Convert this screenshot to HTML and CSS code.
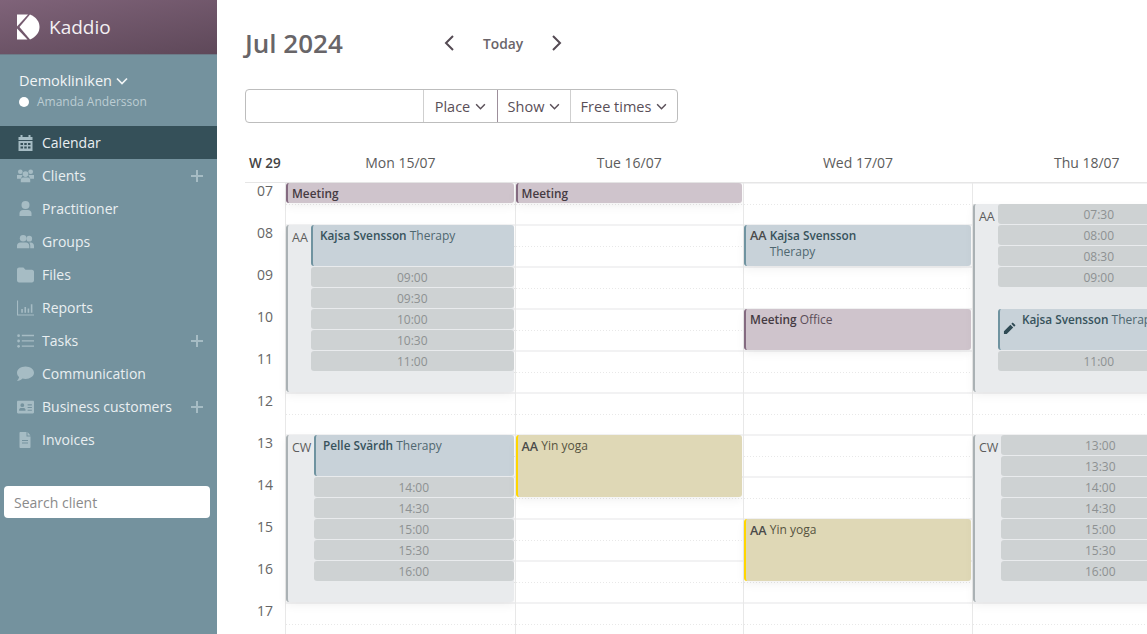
FILE: index.html
```html
<!DOCTYPE html>
<html lang="en">

<head>
    <meta charset="UTF-8">
    <title>Kaddio</title>
    <link rel="stylesheet" href="styles.css">
</head>

<body>
    <aside class="sidebar">
        <div class="brand">
            <svg class="logo" viewBox="0 0 24 26" width="24" height="26">
                <path d="M0 .5h11L0 12.500z" />
                <path d="M0 14.500 10.500 25.500H0z" />
                <path d="M13 .5C19 3 22.500 7.500 22.500 13S19 22.800 13 25.500L2.500 13z" />
            </svg>
            <span class="brand-name">Kaddio</span>
        </div>
        <div class="clinic">
            <div class="clinic-name">Demokliniken
                <svg class="chev" viewBox="0 0 12 8" width="12" height="8"><path d="M1 1.500 6 6.500l5-5" /></svg>
            </div>
            <div class="clinic-user"><i class="dot"></i>Amanda Andersson</div>
        </div>
        <nav class="menu">
            <a class="menu-item active">
                <svg class="ico" viewBox="0 0 16 16"><path d="M3 0h2v2h6V0h2v2h2v3H1V2h2zM1 6h14v10H1zM3 8v2h2.500V8zm3.750 0v2h2.500V8zM10.500 8v2H13V8zM3 11.500v2h2.500v-2zm3.750 0v2h2.500v-2zm3.750 0v2H13v-2z" fill-rule="evenodd" /></svg>
                Calendar
            </a>
            <a class="menu-item">
                <svg class="ico" viewBox="0 0 18 15"><circle cx="3.500" cy="3" r="2.500" /><circle cx="14.500" cy="3" r="2.500" /><circle cx="9" cy="5.500" r="3" /><path d="M0 6.500h6l-2 4H0zM12 6.500h6v4h-4zM4 14v-2.500C4 10 5 9 6.500 9h5c1.500 0 2.500 1 2.500 2.500V14z" /></svg>
                Clients<span class="plus"></span>
            </a>
            <a class="menu-item">
                <svg class="ico" viewBox="0 0 16 16"><circle cx="8" cy="4" r="4" /><path d="M2 15v-2.500C2 10.500 3.500 9 5.500 9h5c2 0 3.500 1.500 3.500 3.500V15z" /></svg>
                Practitioner
            </a>
            <a class="menu-item">
                <svg class="ico" viewBox="0 0 18 15"><circle cx="6.500" cy="3.500" r="3.500" /><circle cx="13" cy="4" r="3" /><path d="M0 14v-2.500C0 9.500 1.500 8 3.500 8h6c2 0 3.500 1.500 3.500 3.500V14zM14 14v-3c0-1-.4-2-1-3h1.500C16.500 8 18 9.500 18 11.500V14z" /></svg>
                Groups
            </a>
            <a class="menu-item">
                <svg class="ico" viewBox="0 0 16 14"><path d="M0 2c0-1 .7-2 2-2h4l2 2h6c1.300 0 2 1 2 2v8c0 1-.7 2-2 2H2c-1.300 0-2-1-2-2z" /></svg>
                Files
            </a>
            <a class="menu-item">
                <svg class="ico" viewBox="0 0 16 14"><path d="M0 0h1v13h15v1H0zM4 8h1.500v3.500H4zM7 6h1.500v5.500H7zM10 7.500h1.500v4H10zM13 3.500h1.500v8H13z" /></svg>
                Reports
            </a>
            <a class="menu-item">
                <svg class="ico" viewBox="0 0 16 14"><circle cx="1.500" cy="2" r="1.300" /><circle cx="1.500" cy="7" r="1.300" /><circle cx="1.500" cy="12" r="1.300" /><path d="M4.500 1.200H16v1.300H4.500zM4.500 6.200H16v1.300H4.500zM4.500 11.200H16v1.300H4.500z" /></svg>
                Tasks<span class="plus"></span>
            </a>
            <a class="menu-item">
                <svg class="ico" viewBox="0 0 16 14"><path d="M8 0c4.400 0 8 2.600 8 5.800s-3.600 5.800-8 5.800c-1 0-1.900-.1-2.800-.4C3.800 12.500 2 13.500 0 13.500c1-1 1.800-2.200 2-3.600C.8 8.900 0 7.400 0 5.800 0 2.600 3.600 0 8 0z" /></svg>
                Communication
            </a>
            <a class="menu-item">
                <svg class="ico" viewBox="0 0 16 12"><path d="M1 0h14c.6 0 1 .4 1 1v10c0 .6-.4 1-1 1H1c-.6 0-1-.4-1-1V1c0-.6.4-1 1-1zm4 2.500a1.800 1.800 0 1 0 0 3.600 1.800 1.800 0 0 0 0-3.600zM2 9.500h6v-1C8 7.500 7 7 6 7H4C3 7 2 7.500 2 8.500zM10 3.500v1h4v-1zm0 2.500v1h4V6zm0 2.500v1h4v-1z" fill-rule="evenodd" /></svg>
                Business customers<span class="plus"></span>
            </a>
            <a class="menu-item">
                <svg class="ico" viewBox="0 0 16 16"><path d="M3 0h6v4.500h4V15c0 .6-.4 1-1 1H3c-.6 0-1-.4-1-1V1c0-.6.4-1 1-1zm7 0 3 3.500h-3zM4.500 8v1h6V8zm0 2.500v1h6v-1z" fill-rule="evenodd" /></svg>
                Invoices
            </a>
        </nav>
        <input class="client-search" type="text" placeholder="Search client">
    </aside>

    <main class="content">
        <div class="topbar">
            <h1 class="month">Jul 2024</h1>
            <div class="pager">
                <svg class="arrow" viewBox="0 0 12 18" width="12" height="18"><path d="M10 2 3 9l7 7" /></svg>
                <span class="today">Today</span>
                <svg class="arrow" viewBox="0 0 12 18" width="12" height="18"><path d="m2 2 7 7-7 7" /></svg>
            </div>
        </div>

        <div class="filters">
            <input class="filter-input" type="text">
            <div class="filter filter-place">Place <svg class="caret" viewBox="0 0 12 8" width="11" height="7"><path d="M1 1.500 6 6.500l5-5" /></svg></div>
            <div class="filter filter-show">Show <svg class="caret" viewBox="0 0 12 8" width="11" height="7"><path d="M1 1.500 6 6.500l5-5" /></svg></div>
            <div class="filter filter-free">Free times <svg class="caret" viewBox="0 0 12 8" width="11" height="7"><path d="M1 1.500 6 6.500l5-5" /></svg></div>
        </div>

        <div class="week-head">
            <div class="week-no">W 29</div>
            <div class="day-name">Mon 15/07</div>
            <div class="day-name">Tue 16/07</div>
            <div class="day-name">Wed 17/07</div>
            <div class="day-name">Thu 18/07</div>
        </div>

        <div class="week">
            <div class="hours">
                <span>07</span><span>08</span><span>09</span><span>10</span><span>11</span><span>12</span>
                <span>13</span><span>14</span><span>15</span><span>16</span><span>17</span>
            </div>

            <!-- each grid row is half an hour, row 1 = 07:00 -->
            <div class="day">
                <div class="ev meeting r1-1"><b>Meeting</b></div>
                <div class="shift r3-8">
                    <div class="initials">AA</div>
                    <div class="slots">
                        <div class="ev client span-2"><b>Kajsa Svensson</b> Therapy</div>
                        <div class="slot">09:00</div>
                        <div class="slot">09:30</div>
                        <div class="slot">10:00</div>
                        <div class="slot">10:30</div>
                        <div class="slot">11:00</div>
                    </div>
                </div>
                <div class="shift r13-8">
                    <div class="initials wide">CW</div>
                    <div class="slots">
                        <div class="ev client span-2"><b>Pelle Svärdh</b> Therapy</div>
                        <div class="slot">14:00</div>
                        <div class="slot">14:30</div>
                        <div class="slot">15:00</div>
                        <div class="slot">15:30</div>
                        <div class="slot">16:00</div>
                    </div>
                </div>
            </div>

            <div class="day">
                <div class="ev meeting r1-1"><b>Meeting</b></div>
                <div class="ev yoga r13-3"><b class="who">AA</b> Yin yoga</div>
            </div>

            <div class="day">
                <div class="ev client two-line r3-2">
                    <b class="who">AA</b>
                    <div><b>Kajsa Svensson</b><br>Therapy</div>
                </div>
                <div class="ev meeting r7-2"><b>Meeting</b> Office</div>
                <div class="ev yoga r17-3"><b class="who">AA</b> Yin yoga</div>
            </div>

            <div class="day">
                <div class="shift r2-9">
                    <div class="initials">AA</div>
                    <div class="slots">
                        <div class="slot">07:30</div>
                        <div class="slot">08:00</div>
                        <div class="slot">08:30</div>
                        <div class="slot">09:00</div>
                        <div class="slot-gap"></div>
                        <div class="ev client editing span-2">
                            <svg class="pencil" viewBox="0 0 14 14" width="13" height="13"><path d="M10.500.5 13.500 3.500 12 5 9 2zM8 3l3 3-7 7H1v-3z" /></svg>
                            <span class="nowrap"><b>Kajsa Svensson</b> Therapy</span>
                        </div>
                        <div class="slot">11:00</div>
                    </div>
                </div>
                <div class="shift r13-8">
                    <div class="initials wide">CW</div>
                    <div class="slots">
                        <div class="slot">13:00</div>
                        <div class="slot">13:30</div>
                        <div class="slot">14:00</div>
                        <div class="slot">14:30</div>
                        <div class="slot">15:00</div>
                        <div class="slot">15:30</div>
                        <div class="slot">16:00</div>
                    </div>
                </div>
            </div>
        </div>
    </main>
</body>

</html>
```

FILE: styles.css
```css
* {
    box-sizing: border-box;
}

html,
body {
    height: 100%;
}

body {
    margin: 0;
    display: flex;
    overflow: hidden;
    background: #fff;
    font-family: "Open Sans", "Noto Sans", sans-serif;
    font-size: 14px;
    color: #555;
}

/* sidebar */
.sidebar {
    flex: 0 0 217px;
    background: #74929e;
    color: #edf2f4;
}

.brand {
    height: 55px;
    display: flex;
    align-items: center;
    padding-left: 17px;
    background: linear-gradient(170deg, #7f6379 0%, #5e4859 100%);
    border-bottom: 1px solid #6c7b88;
}

.logo {
    fill: #fff;
}

.brand-name {
    margin-left: 8px;
    font-size: 19px;
    color: #f3eff2;
}

.clinic {
    height: 71px;
    padding: 16px 0 0 19px;
}

.clinic-name {
    display: flex;
    align-items: center;
    gap: 4px;
    font-size: 14.500px;
    line-height: 20px;
    color: #f2f5f6;
}

.chev {
    fill: none;
    stroke: #f2f5f6;
    stroke-width: 1.700;
}

.clinic-user {
    display: flex;
    align-items: center;
    margin-top: 1px;
    font-size: 12px;
    line-height: 20px;
    color: #bccdd3;
}

.dot {
    width: 10px;
    height: 10px;
    margin-right: 8px;
    border-radius: 50%;
    background: #fff;
}

.menu {
    display: flex;
    flex-direction: column;
}

.menu-item {
    height: 33px;
    display: flex;
    align-items: center;
    padding: 0 14px 0 17px;
    font-size: 14px;
    color: #e9eff1;
}

.menu-item.active {
    background: #355059;
}

.ico {
    width: 17px;
    height: 16px;
    margin-right: 8px;
    fill: #a6bcc4;
    flex: none;
}

.plus {
    position: relative;
    width: 12px;
    height: 12px;
    margin-left: auto;
}

.plus::before,
.plus::after {
    content: "";
    position: absolute;
    background: #a6bcc4;
}

.plus::before {
    left: 0;
    right: 0;
    top: 5px;
    height: 2px;
}

.plus::after {
    top: 0;
    bottom: 0;
    left: 5px;
    width: 2px;
}

.client-search {
    display: block;
    width: 206px;
    height: 32px;
    margin: 30px 0 0 4px;
    padding: 0 10px;
    border: 0;
    border-radius: 4px;
    background: #fff;
    font: 14px "Open Sans", sans-serif;
}

.client-search::placeholder {
    color: #8a8a8a;
}

/* main column */
.content {
    flex: 1;
    min-width: 0;
    padding-left: 28px;
    overflow: hidden;
}

.topbar {
    height: 89px;
    display: flex;
    padding-top: 24px;
    align-items: flex-start;
}

.month {
    width: 198px;
    margin: 0;
    font-size: 26px;
    line-height: 38px;
    font-weight: 600;
    color: #686568;
}

.pager {
    display: flex;
    align-items: center;
    height: 38px;
}

.arrow {
    fill: none;
    stroke: #544a53;
    stroke-width: 2;
}

.today {
    width: 41px;
    margin: 0 27px 0 28px;
    font-size: 13.800px;
    font-weight: 600;
    color: #6a6469;
    white-space: nowrap;
}

.filters {
    width: 433px;
    height: 34px;
    display: flex;
    border: 1px solid #bdbdbd;
    border-radius: 4px;
}

.filter-input {
    width: 177px;
    border: 0;
    background: transparent;
    outline: none;
}

.filter {
    display: flex;
    align-items: center;
    justify-content: center;
    gap: 5px;
    border-left: 1px solid #cfcfcf;
    font-size: 14.500px;
    color: #5a4f58;
}

.filter-place {
    width: 74px;
}

.filter-show {
    width: 73px;
    border-left-color: #9d8f9b;
}

.filter-free {
    width: 107px;
}

.caret {
    fill: none;
    stroke: #5a4f58;
    stroke-width: 1.700;
}

.week-head {
    width: 960px;
    display: grid;
    grid-template-columns: 41px repeat(4, 228.800px);
    height: 60px;
    padding-top: 30px;
    border-bottom: 1px solid #e6e6e6;
    line-height: 20px;
}

.week-no {
    padding-left: 4px;
    font-weight: 600;
    color: #444;
    font-size: 13.500px;
}

.day-name {
    text-align: center;
    color: #5c5c5c;
}

.week {
    width: 960px;
    display: grid;
    grid-template-columns: 40px 229.600px 228.500px 228.800px 228.800px;
}

.hours {
    display: grid;
    grid-auto-rows: 42px;
    padding-right: 12px;
    text-align: right;
    font-size: 14px;
    line-height: 16px;
    color: #666;
}

/* hour line, then a white mask with a slit that shows the dots at half past */
.day {
    display: grid;
    grid-template-rows: repeat(24, 21px);
    align-content: start;
    height: 504px;
    border-left: 1px solid #e8e8e8;
    background:
        linear-gradient(#f2f2f3 0 2px, transparent 2px) 0 -1px / 100% 42px,
        linear-gradient(#fff 0 21px, transparent 21px 22px, #fff 22px) 0 0 / 100% 42px,
        linear-gradient(to right, #e8e8e8 1px, transparent 1px) 0 0 / 3px 42px;
}

.r1-1 { grid-row: 1 / span 1; }
.r2-9 { grid-row: 2 / span 9; }
.r3-2 { grid-row: 3 / span 2; }
.r3-8 { grid-row: 3 / span 8; }
.r7-2 { grid-row: 7 / span 2; }
.r13-3 { grid-row: 13 / span 3; }
.r13-8 { grid-row: 13 / span 8; }
.r17-3 { grid-row: 17 / span 3; }
.span-2 { grid-row: span 2; }

.day > .ev,
.day > .shift {
    grid-column: 1;
    margin: 0 1px 1px 0;
}

.ev {
    border-left: 2px solid #6f93a0;
    border-radius: 3px;
    padding: 1px 0 0 4px;
    font-size: 12px;
    line-height: 18px;
    color: #555;
    overflow: hidden;
    white-space: nowrap;
    box-shadow: 0 4px 10px rgba(0, 0, 0, .05);
}

.ev b {
    font-size: 11.800px;
    font-weight: 600;
}

.client.ev {
    padding-left: 7px;
}

.client.two-line {
    padding-left: 4px;
}

.meeting {
    background: #cfc4cc;
    border-left-color: #846a80;
    color: #5b4e58;
}

.meeting b {
    color: #453b43;
}

.client {
    background: #c8d2d9;
    color: #4f6770;
}

.client b {
    color: #37525c;
}

.yoga {
    padding-top: 2px;
    background: #dfd8b6;
    border-left-color: #ffd600;
    color: #565340;
}

.ev .who {
    color: #4a4a4a;
    font-size: 12.500px;
    font-weight: 600;
}

.yoga .who {
    vertical-align: -1px;
}

.two-line {
    display: flex;
    gap: 3px;
    line-height: 16px;
    padding-top: 2px;
}

.two-line .who {
    margin-top: 1px;
}

.shift {
    display: flex;
    background: #e9ebed;
    border-left: 2px solid #aab1b4;
    border-radius: 3px;
    box-shadow: 0 4px 10px rgba(0, 0, 0, .05);
}

.initials {
    flex: none;
    width: 23px;
    padding: 3px 0 0 4px;
    font-size: 12.500px;
    line-height: 20px;
    color: #5c5c5c;
}

.initials.wide {
    width: 26px;
}

.slots {
    flex: 1;
    min-width: 0;
    display: grid;
    grid-auto-rows: 21px;
}

.slot {
    margin-bottom: 1px;
    border-radius: 3px;
    background: #ced2d3;
    text-align: center;
    font-size: 12px;
    line-height: 22px;
    color: #8d9192;
}

.slot-gap {
    height: 21px;
}

.slots .ev {
    margin-bottom: 1px;
    box-shadow: none;
}

.editing {
    display: flex;
}

.nowrap {
    white-space: nowrap;
}

.pencil {
    flex: none;
    margin: 12px 6px 0 -4px;
    fill: #2f4a54;
}
```
